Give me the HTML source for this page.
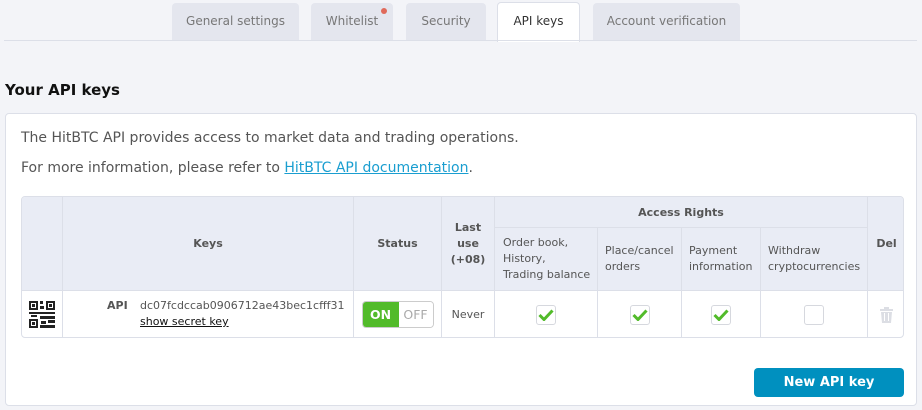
<!DOCTYPE html>
<html><head><meta charset="utf-8"><style>
*{box-sizing:border-box;margin:0;padding:0}
body{width:922px;height:410px;background:#f3f4f8;font-family:"DejaVu Sans",Verdana,sans-serif;color:#555;position:relative;overflow:hidden}
.a{position:absolute}
.tab{position:absolute;top:3px;height:38px;background:#e4e6ee;border-radius:4px 4px 0 0;font-size:12px;color:#777;text-align:center;line-height:37px}
.c{position:absolute;display:flex;align-items:center;justify-content:center;text-align:center;border-right:1px solid #dcdfe8;border-bottom:1px solid #dcdfe8;font-size:11px}
.h{background:#e9ecf5;color:#555}
.b{font-weight:bold;color:#555}
.chk{width:20px;height:20px;border:1px solid #d6d8de;border-radius:3px;background:#fff;display:flex;align-items:center;justify-content:center}
</style></head><body>
<div class="tab" style="left:172px;width:127px">General settings</div>
<div class="tab" style="left:311px;width:82px">Whitelist</div>
<div class="a" style="left:381px;top:8px;width:6px;height:6px;border-radius:3px;background:#e06a5a"></div>
<div class="tab" style="left:406px;width:80px">Security</div>
<div class="tab" style="left:497px;top:2px;width:83px;height:40px;background:#fff;border:1px solid #dcdfe8;border-bottom:none;color:#333">API keys</div>
<div class="tab" style="left:593px;width:147px">Account verification</div>
<div class="a" style="left:4px;top:40px;width:913px;height:1px;background:#dcdfe8"></div>
<div class="a" style="left:5px;top:81px;font-size:15px;font-weight:bold;color:#111">Your API keys</div>
<div class="a" style="left:5px;top:113px;width:912px;height:293px;background:#fff;border:1px solid #dcdfe8;border-radius:4px"></div>
<div class="a" style="left:21px;top:130px;font-size:14px;color:#555">The HitBTC API provides access to market data and trading operations.</div>
<div class="a" style="left:21px;top:160px;font-size:14px;color:#555">For more information, please refer to <span style="color:#1a9ed0;text-decoration:underline">HitBTC API documentation</span>.</div>
<div class="a" style="left:21px;top:196px;width:883px;height:142px;border:1px solid #dcdfe8;border-radius:4px;overflow:hidden">
 <div class="c h" style="left:0;top:0;width:41px;height:94px"></div>
 <div class="c h b" style="left:41px;top:0;width:291px;height:94px">Keys</div>
 <div class="c h b" style="left:332px;top:0;width:88px;height:94px">Status</div>
 <div class="c h b" style="left:420px;top:0;width:53px;height:94px;line-height:16px">Last<br>use<br>(+08)</div>
 <div class="c h b" style="left:473px;top:0;width:373px;height:31px">Access Rights</div>
 <div class="c h" style="left:473px;top:31px;width:103px;height:63px;justify-content:flex-start;text-align:left;padding-left:8px;line-height:16px">Order book,<br>History,<br>Trading balance</div>
 <div class="c h" style="left:576px;top:31px;width:84px;height:63px;justify-content:flex-start;text-align:left;padding-left:7px;line-height:16px">Place/cancel<br>orders</div>
 <div class="c h" style="left:660px;top:31px;width:79px;height:63px;justify-content:flex-start;text-align:left;padding-left:7px;line-height:16px">Payment<br>information</div>
 <div class="c h" style="left:739px;top:31px;width:107px;height:63px;justify-content:flex-start;text-align:left;padding-left:7px;line-height:16px">Withdraw<br>cryptocurrencies</div>
 <div class="c h b" style="left:846px;top:0;width:37px;height:94px;border-right:none">Del</div>
 <div class="c" style="left:0;top:94px;width:41px;height:47px;border-bottom:none">
  <svg width="26" height="27" viewBox="0 0 26 27"><g fill="#222"><path d="M0 0h9v9H0zM2 2v5h5V2z"/><rect x="3" y="3" width="3" height="3"/><path d="M17 0h9v9h-9zM19 2v5h5V2z"/><rect x="20" y="3" width="3" height="3"/><path d="M0 18h9v9H0zM2 20v5h5v-5z"/><rect x="3" y="21" width="3" height="3"/><rect x="11" y="0" width="3" height="3"/><rect x="11" y="5" width="4" height="3"/><rect x="0" y="11" width="26" height="2"/><rect x="2" y="14" width="6" height="2"/><rect x="11" y="15" width="15" height="3"/><rect x="12" y="20" width="5" height="3"/><rect x="19" y="19" width="7" height="3"/><rect x="11" y="24" width="15" height="3"/></g></svg>
 </div>
 <div class="c" style="left:41px;top:94px;width:291px;height:47px;border-bottom:none">
  <span style="position:absolute;left:44px;top:8px;font-weight:bold;font-size:11px">API</span>
  <span style="position:absolute;left:77px;top:8px;font-size:11px">dc07fcdccab0906712ae43bec1cfff31</span>
  <span style="position:absolute;left:77px;top:24px;font-size:11px;color:#111;text-decoration:underline">show secret key</span>
 </div>
 <div class="c" style="left:332px;top:94px;width:88px;height:47px;border-bottom:none">
  <div style="display:flex;width:72px;height:27px;border:1px solid #ccc;border-radius:4px;overflow:hidden;font-size:12.5px">
   <div style="width:36px;background:#52bb2a;color:#fff;font-weight:bold;line-height:25px">ON</div>
   <div style="flex:1;color:#aaa;line-height:25px;background:#fff">OFF</div>
  </div>
 </div>
 <div class="c" style="left:420px;top:94px;width:53px;height:47px;border-bottom:none">Never</div>
 <div class="c" style="left:473px;top:94px;width:103px;height:47px;border-bottom:none"><div class="chk"><svg width="16" height="12" viewBox="0 0 16 12"><path d="M1.5 6l4.5 4.5L14.5 1.5" fill="none" stroke="#52bb2a" stroke-width="3"/></svg></div></div>
 <div class="c" style="left:576px;top:94px;width:84px;height:47px;border-bottom:none"><div class="chk"><svg width="16" height="12" viewBox="0 0 16 12"><path d="M1.5 6l4.5 4.5L14.5 1.5" fill="none" stroke="#52bb2a" stroke-width="3"/></svg></div></div>
 <div class="c" style="left:660px;top:94px;width:79px;height:47px;border-bottom:none"><div class="chk"><svg width="16" height="12" viewBox="0 0 16 12"><path d="M1.5 6l4.5 4.5L14.5 1.5" fill="none" stroke="#52bb2a" stroke-width="3"/></svg></div></div>
 <div class="c" style="left:739px;top:94px;width:107px;height:47px;border-bottom:none"><div class="chk"></div></div>
 <div class="c" style="left:846px;top:94px;width:37px;height:47px;border:none">
  <svg width="13" height="16" viewBox="0 0 13 16"><g fill="#dcdee4"><rect x="0" y="2" width="13" height="2"/><rect x="4" y="0" width="5" height="2"/><path d="M1 5h11l-1 11H2z"/></g><g fill="#fff"><rect x="4" y="6" width="1" height="8"/><rect x="8" y="6" width="1" height="8"/></g></svg>
 </div>
</div>
<div class="a" style="left:754px;top:368px;width:150px;height:29px;background:#0090bf;border-radius:4px;color:#fff;font-weight:bold;font-size:13px;text-align:center;line-height:29px">New API key</div>
</body></html>
